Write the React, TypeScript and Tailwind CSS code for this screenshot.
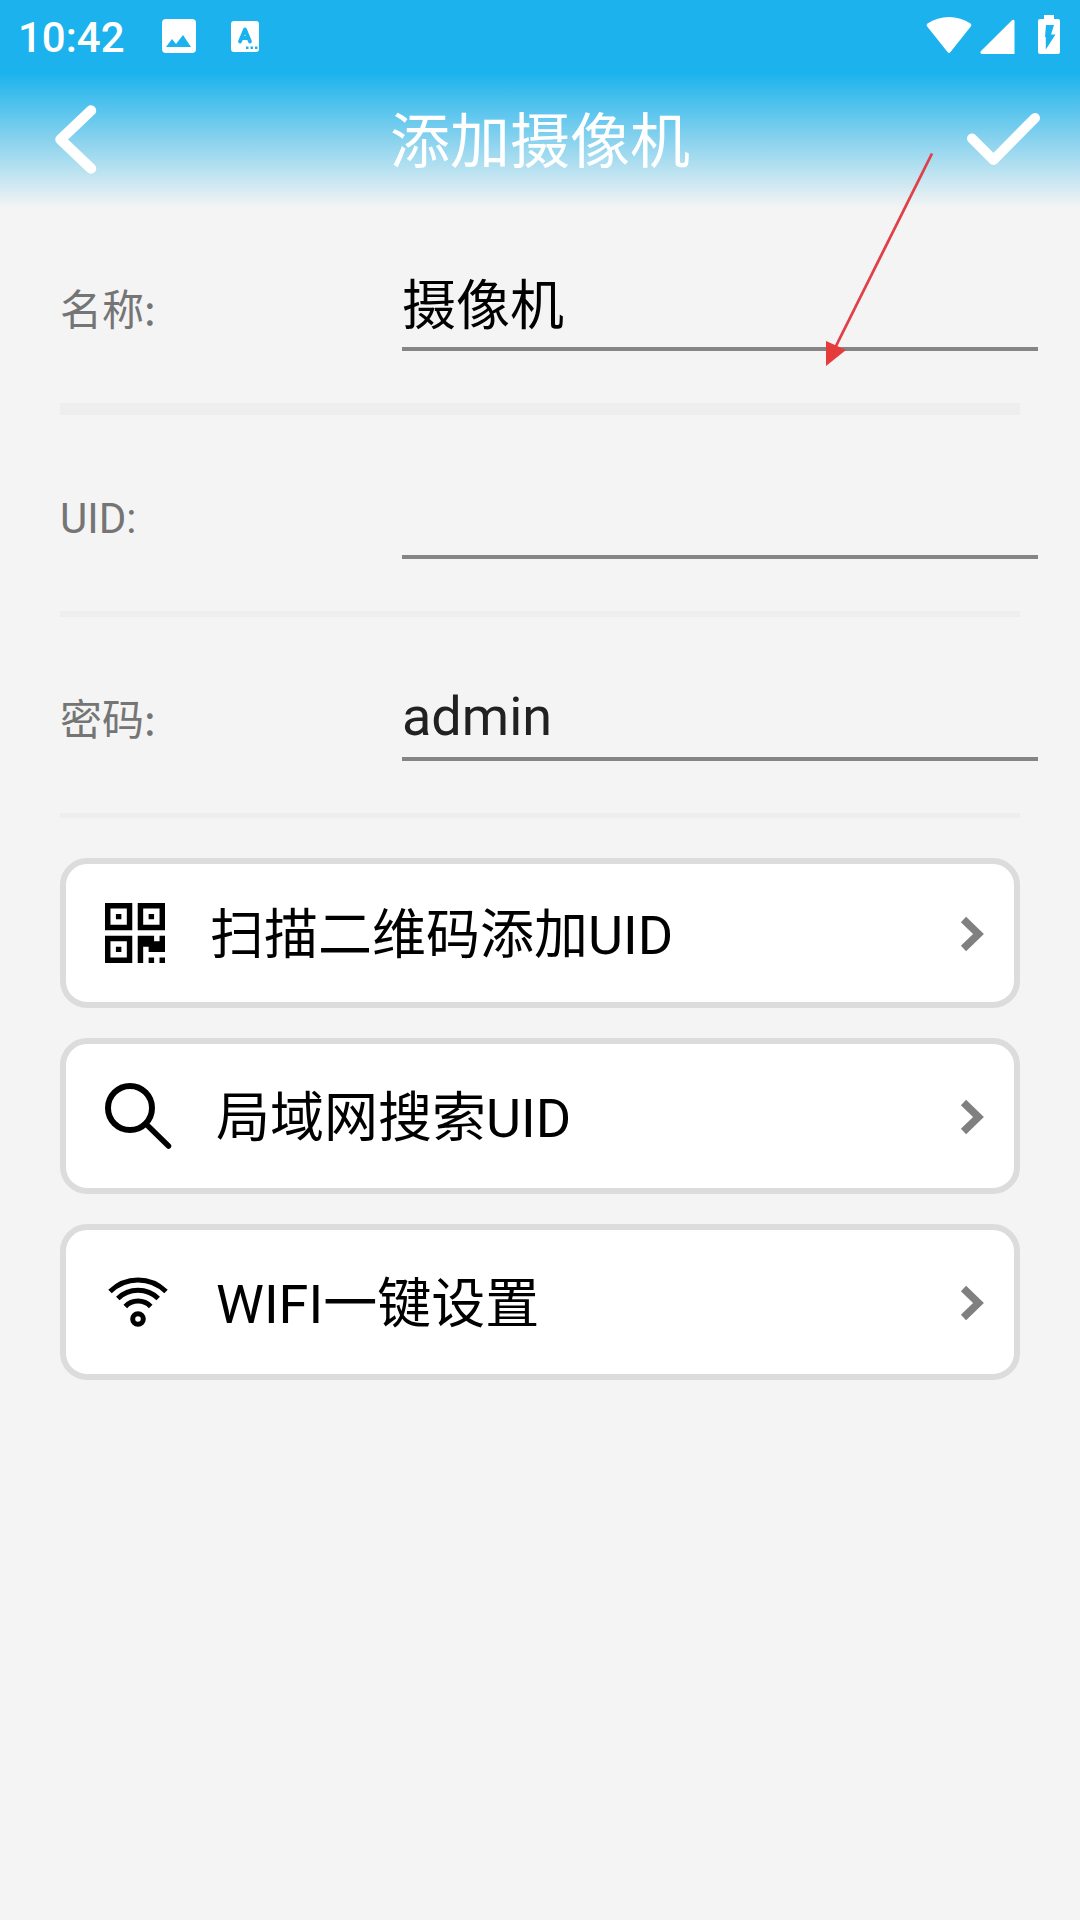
// App.tsx
// "Add camera" screen: status bar, header, form fields and the UID shortcuts

import type { ReactNode } from 'react';

const fields = [
  {
    label: '名称:',
    value: '摄像机',
    row: 'h-[195px]',
    labelClass: "pt-[72px] font-['Noto_Sans_CJK_SC']",
    inputClass: 'h-[143px] text-black pb-1',
    divider: 'h-3',
  },
  {
    label: 'UID:',
    value: '',
    row: 'h-[196px]',
    labelClass: 'pt-[77px]',
    inputClass: 'h-[144px] text-black pb-1',
    divider: 'h-1.5',
  },
  {
    label: '密码:',
    value: 'admin',
    row: 'h-[196px]',
    labelClass: "pt-[73px] font-['Noto_Sans_CJK_SC']",
    inputClass: 'h-[144px] text-[#212121] pb-1',
    divider: 'h-[5px]',
  },
];

function StatusBar() {
  return (
    <div className="h-[75px] bg-[#1bb2ed] flex items-start justify-between text-white">
      <div className="flex items-start pl-[18px]">
        <span className="w-[143px] pt-3.5 text-[42px] leading-[48px] font-medium">10:42</span>
        {/* Picture notification */}
        <svg className="mt-[18px] h-9 w-9" viewBox="0 0 36 36">
          <rect x="1" y="1" width="34" height="34" rx="4" fill="currentColor" />
          <path d="M5 29l6-8 4 5 7-9 8 12z" fill="#1bb2ed" />
        </svg>
        {/* Input language notification */}
        <svg className="mt-5 ml-[33px] h-8 w-7.5" viewBox="0 0 30 32">
          <rect x="1" y="1" width="28" height="31" rx="3" fill="currentColor" />
          <path d="M10 21.500L15 9.500L20 21.500M11.500 18H18.500" fill="none" stroke="#1bb2ed" strokeWidth="3.800" strokeLinecap="round" strokeLinejoin="round" />
          <path d="M16 26.500h2.500v2.500H16zM20.500 26.500H23v2.500h-2.500zM25 26.500h2.500v2.500H25z" fill="#1bb2ed" />
        </svg>
      </div>
      <div className="flex items-start pr-5">
        <svg className="mt-4 h-[38px] w-[46px]" viewBox="0 0 46 38">
          <path d="M1.500 7.500C14 -1.200 32 -1.200 44.500 7.500Q46 8.800 44.800 10.500L24.500 36Q23 37.800 21.500 36L1.200 10.500Q0 8.800 1.500 7.500z" fill="currentColor" />
        </svg>
        <svg className="mt-[19px] ml-[8px] h-[35px] w-[35px]" viewBox="0 0 35 35">
          <path d="M32 1.200Q34 0 34.500 2V35H2Q-0.500 34.200 1 32z" fill="currentColor" />
        </svg>
        <svg className="mt-[15px] ml-[23px] h-[39px] w-[22px]" viewBox="0 0 22 39">
          <path d="M6 0h10v4h4q2 0 2 2v31q0 2-2 2H2q-2 0-2-2V6q0-2 2-2h4z" fill="currentColor" />
          <path d="M8 10h8l-3 9.500h4.500L7.800 34.500V22H7z" fill="#1bb2ed" />
        </svg>
      </div>
    </div>
  );
}

function Header() {
  return (
    <header className="h-[133px] bg-linear-[to_bottom,#1fb4ed,#8bd3ee_50%,#f4f4f4] flex items-start justify-between pl-[54px] pr-[39px] text-white">
      <button className="mt-[29px]">
        <svg className="h-[72px] w-[44px]" viewBox="0 0 44 72" fill="none" stroke="currentColor" strokeWidth="10.500" strokeLinecap="round" strokeLinejoin="round">
          <path d="M37 6.500L6.500 35.500L37 64.500" />
        </svg>
      </button>
      <h1 className="ml-[17px] pt-[23px] text-[60px] leading-[90px] font-normal">添加摄像机</h1>
      <button className="mt-[37px]">
        <svg className="h-[56px] w-[76px]" viewBox="0 0 76 56" fill="none" stroke="currentColor" strokeWidth="10" strokeLinecap="round" strokeLinejoin="round">
          <path d="M7 26.500L28.500 48L70 6" />
        </svg>
      </button>
    </header>
  );
}

function QrIcon() {
  return (
    <svg className="h-15 w-15" viewBox="0 0 11 11" fill="currentColor">
      <path fillRule="evenodd" d="M0 0h5v5H0zM1 1v3h3V1zM6 0h5v5H6zM7 1v3h3V1zM0 6h5v5H0zM1 7v3h3V7z" />
      <path d="M2 2h1v1H2zM8 2h1v1H8zM2 8h1v1H2zM6 6h3v1h1V6h1v3H8V8H7v3H6zM8 10h1v1H8zM10 10h1v1h-1z" />
    </svg>
  );
}

function SearchIcon() {
  return (
    <svg className="h-[68px] w-[68px]" viewBox="0 0 68 68" fill="none" stroke="currentColor">
      <circle cx="25" cy="26" r="22" strokeWidth="6" />
      <path d="M41 42L63.500 64" strokeWidth="5.500" strokeLinecap="round" />
    </svg>
  );
}

function WifiIcon() {
  return (
    <svg className="h-[50px] w-[60px]" viewBox="0 0 60 50" fill="none" stroke="currentColor" strokeWidth="5">
      <path d="M2 14.500C18 -0.800 42 -0.800 58 14.500" />
      <path d="M9.800 21.500C21 10.500 39 10.500 50.200 21.500" />
      <path d="M17.300 29.500C24 22.300 36 22.300 42.700 29.500" />
      <circle cx="30" cy="42" r="5.300" />
    </svg>
  );
}

type ActionCardProps = {
  icon: ReactNode;
  title: string;
  className: string;
  textClass: string;
};

function ActionCard({ icon, title, className, textClass }: ActionCardProps) {
  return (
    <button className={`flex w-full items-center rounded-[27px] border-6 border-[#dcdcdc] bg-white text-left text-black ${className}`}>
      <span className="w-[66px] shrink-0">{icon}</span>
      <span className={`flex-1 pt-1.5 text-[54px] leading-[80px] ${textClass}`}>{title}</span>
      <svg className="mt-0.5 mr-[30px] h-9 w-6" viewBox="0 0 24 36" fill="none" stroke="#808080" strokeWidth="7.500">
        <path d="M3.500 3.500L18.500 18L3.500 32.500" />
      </svg>
    </button>
  );
}

export default function App() {
  return (
    <div className="relative h-[1920px] w-[1080px] overflow-hidden bg-[#f4f4f4] font-['Roboto','Noto_Sans_CJK_SC',sans-serif]">
      <StatusBar />
      <Header />

      <main className="pl-[60px]">
        {/* Form fields */}
        {fields.map((field) => (
          <div key={field.label}>
            <div className={`flex items-start ${field.row}`}>
              <label className={`w-[342px] text-[42px] leading-[54px] text-[#757575] ${field.labelClass}`}>{field.label}</label>
              <div className={`w-[636px] border-b-4 border-[#858585] flex items-end text-[54px] leading-[72px] ${field.inputClass}`}>
                <span>{field.value}</span>
              </div>
            </div>
            <div className={`w-[960px] bg-[#eeeeee] ${field.divider}`} />
          </div>
        ))}

        {/* Ways to fill in the UID */}
        <div className="mt-10 flex w-[960px] flex-col gap-[30px]">
          <ActionCard icon={<QrIcon />} title="扫描二维码添加UID" className="h-[150px] pl-[39px]" textClass="pl-[39px]" />
          <ActionCard icon={<SearchIcon />} title="局域网搜索UID" className="h-[156px] pl-[39px]" textClass="pl-[45px]" />
          <ActionCard icon={<WifiIcon />} title="WIFI一键设置" className="h-[156px] pl-[42px]" textClass="pl-[42px]" />
        </div>
      </main>

      {/* Red pointer lying over the form */}
      <svg className="pointer-events-none absolute top-[150px] left-[820px] h-[220px] w-[120px]" viewBox="820 150 120 220">
        <path d="M932 153.500L834 350" stroke="#e04048" strokeWidth="2.800" />
        <path d="M826 341L846 350L826 366z" fill="#e53b3b" />
      </svg>
    </div>
  );
}
